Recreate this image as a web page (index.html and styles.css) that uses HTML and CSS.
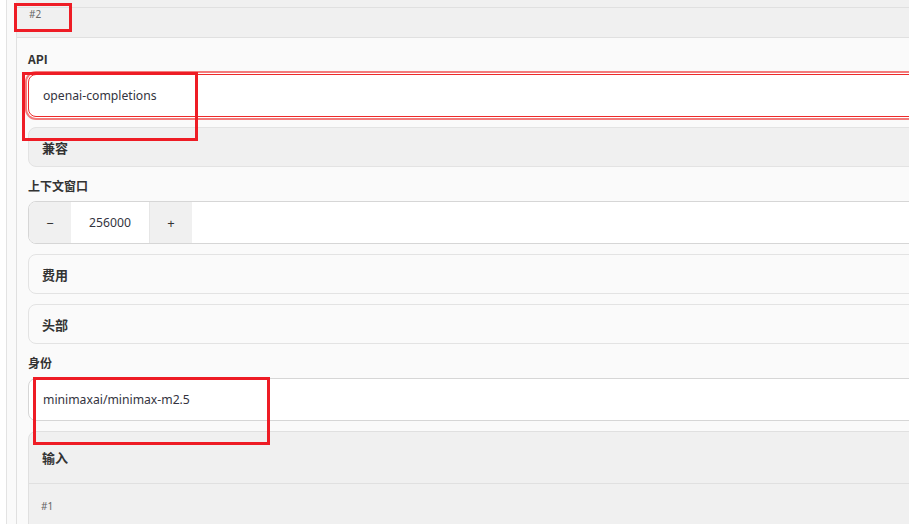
FILE: index.html
```html
<!DOCTYPE html>
<html lang="zh">
<head>
<meta charset="utf-8">
<link rel="stylesheet" href="styles.css">
</head>
<body>
<div class="outer">
  <div class="prev"></div>
  <div class="item">
    <div class="item-head">#2</div>
    <div class="panel">
      <div class="field">
        <div class="label">API</div>
        <div class="input focused">openai-completions</div>
      </div>
      <div class="section gray"><span class="sec-title">兼容</span></div>
      <div class="field">
        <div class="label">上下文窗口</div>
        <div class="number">
          <div class="btn">−</div>
          <div class="value">256000</div>
          <div class="btn plus">+</div>
          <div class="rest"></div>
        </div>
      </div>
      <div class="section"><span class="sec-title">费用</span></div>
      <div class="section"><span class="sec-title">头部</span></div>
      <div class="field">
        <div class="label">身份</div>
        <div class="input">minimaxai/minimax-m2.5</div>
      </div>
      <div class="group">
        <div class="group-head"><span class="sec-title">输入</span></div>
        <div class="group-body"><span class="sub-id">#1</span></div>
      </div>
    </div>
  </div>
</div>
<div class="mark m1"></div>
<div class="mark m2"></div>
<div class="mark m3"></div>
</body>
</html>
```

FILE: styles.css
```css
html, body {
  margin: 0;
  padding: 0;
  overflow: hidden;
  height: 524px;
  background: #ffffff;
  font-family: "Noto Sans", "Noto Sans CJK SC", sans-serif;
  color: #333333;
}

.outer {
  margin-left: 6px;
  width: 960px;
  height: 540px;
  border-left: 1px solid #e3e3e3;
  background: #fafafa;
  padding-left: 9px;
}

.prev {
  height: 7px;
  background: #f0f0f0;
}

.item {
  border-top: 1px solid #e0e0e0;
  border-left: 1px solid #e0e0e0;
}

.item-head {
  height: 29px;
  padding: 0 12px;
  background: #f0f0f0;
  border-bottom: 1px solid #e0e0e0;
  font-size: 10px;
  line-height: 12px;
  color: #666666;
}

.panel {
  background: #fafafa;
  padding: 12px 0 0 11px;
  display: flex;
  flex-direction: column;
  gap: 10px;
}

.field {
  display: flex;
  flex-direction: column;
}

.label {
  font-family: "Noto Sans CJK SC", "Noto Sans", sans-serif;
  font-size: 12px;
  font-weight: 700;
  line-height: 17px;
  margin-bottom: 7px;
  color: #333333;
}

.input {
  height: 41px;
  display: flex;
  align-items: center;
  padding-left: 14px;
  background: #ffffff;
  border: 1px solid #d6d6d6;
  border-radius: 8px;
  font-size: 12.2px;
  color: #333340;
}

.input.focused {
  border-color: #ee2a2a;
  box-shadow: 0 0 0 1px #ffffff, 0 0 0 3px rgba(240, 80, 80, 0.75);
}

.section {
  height: 38px;
  display: flex;
  align-items: center;
  padding-left: 13px;
  background: #fafafa;
  border: 1px solid #e3e3e3;
  border-radius: 8px;
}

.section.gray {
  background: #f0f0f0;
}

.sec-title {
  font-family: "Noto Sans CJK SC", sans-serif;
  font-size: 13px;
  font-weight: 700;
  color: #333333;
}

.number {
  display: flex;
  height: 41px;
  border: 1px solid #d6d6d6;
  border-radius: 8px;
  overflow: hidden;
  background: #ffffff;
}

.btn {
  width: 42px;
  display: flex;
  align-items: center;
  justify-content: center;
  background: #f0f0f0;
  font-size: 13px;
  color: #333333;
}

.btn.plus {
  border-left: 1px solid #e6e6e6;
}

.value {
  width: 78px;
  display: flex;
  align-items: center;
  justify-content: center;
  font-size: 12.2px;
  color: #333340;
  background: #ffffff;
}

.rest {
  flex: 1;
  background: #ffffff;
}

.group {
  border: 1px solid #e0e0e0;
  border-radius: 8px 8px 0 0;
  background: #f0f0f0;
}

.group-head {
  height: 51px;
  display: flex;
  align-items: center;
  padding-left: 13px;
  border-bottom: 1px solid #e0e0e0;
}

.group-body {
  height: 60px;
  padding: 15px 12px 0;
  font-size: 10px;
  line-height: 14px;
}

.sub-id {
  color: #666666;
}

.mark {
  position: absolute;
  border: 3px solid #ee1c25;
  box-sizing: border-box;
}

.m1 { left: 14px; top: 3px; width: 58px; height: 29px; }
.m2 { left: 22px; top: 72px; width: 176px; height: 69px; }
.m3 { left: 33px; top: 377px; width: 237px; height: 68px; }
```
